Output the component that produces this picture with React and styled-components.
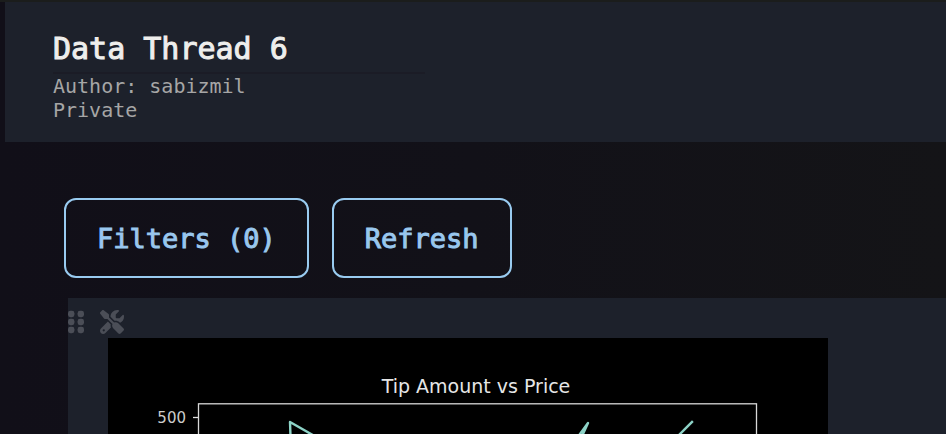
import React from "react";
import styled, { createGlobalStyle } from "styled-components";
import { FaScrewdriverWrench } from "react-icons/fa6";

const GlobalStyle = createGlobalStyle`
  *, *::before, *::after { box-sizing: border-box; }
  body {
    margin: 0;
    background: #121118;
    color: #eeeeec;
    font-family: "DejaVu Sans Mono", monospace;
  }
`;

const Page = styled.div`
  height: 100vh;
  overflow: hidden;
  border-top: 2px solid #1b1d1c;
  background: linear-gradient(90deg, #110f18 0%, #121118 50%, #141417 100%);
`;

const Header = styled.header`
  margin-left: 5px;
  padding: 24px 48px 20px;
  background: #1d212b;
`;

const Title = styled.h1`
  margin: 0;
  width: 372px;
  max-width: 100%;
  border-bottom: 2px solid #1b1c26;
  font-size: 30px;
  font-weight: 400;
  line-height: 46px;
  -webkit-text-stroke: 1px currentColor;
`;

const Meta = styled.p`
  margin: 0;
  color: #a6a6a6;
  font-size: 20px;
  line-height: 24px;
`;

const Actions = styled.div`
  display: flex;
  flex-wrap: wrap;
  gap: 23px;
  padding: 56px 64px 20px;
`;

const ActionButton = styled.button`
  height: 80px;
  padding: 0 31px;
  border: 2px solid #99cbf0;
  border-radius: 12px;
  background: transparent;
  color: #99c7ee;
  font-family: inherit;
  font-size: 27px;
  -webkit-text-stroke: 1px currentColor;
  cursor: pointer;
`;

const Panel = styled.section`
  margin-left: 68px;
  padding-bottom: 40px;
  background: #1d212b;
`;

const PanelTools = styled.div`
  display: flex;
  align-items: center;
  gap: 16px;
  height: 40px;
  padding-top: 8px;
`;

const IconButton = styled.button`
  display: flex;
  padding: 0;
  border: 0;
  background: none;
  color: #4b4e57;
  cursor: pointer;
`;

const Chart = styled.svg`
  display: block;
  width: 720px;
  height: auto;
  margin-left: 40px;
  background: #000;
  font-family: "DejaVu Sans", sans-serif;
`;

const actions = ["Filters (0)", "Refresh"];

function GripIcon() {
  return (
    <svg width="16" height="24" viewBox="0 0 16 24" fill="currentColor" aria-hidden="true">
      {[0.8, 8.8, 16.8].map((y) =>
        [0, 9.6].map((x) => (
          <rect key={`${x}-${y}`} x={x} y={y} width="6.4" height="6.4" rx="2.4" />
        ))
      )}
    </svg>
  );
}

function TipChart() {
  return (
    <Chart viewBox="0 0 720 540" role="img" aria-label="Tip Amount vs Price">
      <text x="368" y="55" fill="#e6e6e6" fontSize="19" textAnchor="middle">
        Tip Amount vs Price
      </text>
      <text x="78" y="85" fill="#cccccc" fontSize="15" textAnchor="end">
        500
      </text>
      <path d="M85 79.5H90" stroke="#ddd" strokeWidth="1.3" />
      <rect x="90.5" y="65.8" width="558" height="416" fill="none" stroke="#d8d8d8" strokeWidth="1.3" />
      <g fill="none" stroke="#8dd3c7" strokeWidth="2.4" strokeLinecap="square">
        <path d="M184 140L182 84L238 116" strokeLinejoin="round" />
        <path d="M440 140L480 85L455 140" strokeLinejoin="round" />
        <path d="M560 108L584 84" />
      </g>
    </Chart>
  );
}

export default function App() {
  return (
    <>
      <GlobalStyle />
      <Page>
        <Header>
          <Title>Data Thread 6</Title>
          <Meta>Author: sabizmil</Meta>
          <Meta>Private</Meta>
        </Header>
        <main>
          <Actions>
            {actions.map((label) => (
              <ActionButton key={label} type="button">
                {label}
              </ActionButton>
            ))}
          </Actions>
          <Panel>
            <PanelTools>
              <IconButton type="button" aria-label="Move panel">
                <GripIcon />
              </IconButton>
              <IconButton type="button" aria-label="Panel settings">
                <FaScrewdriverWrench size={24} />
              </IconButton>
            </PanelTools>
            <TipChart />
          </Panel>
        </main>
      </Page>
    </>
  );
}
